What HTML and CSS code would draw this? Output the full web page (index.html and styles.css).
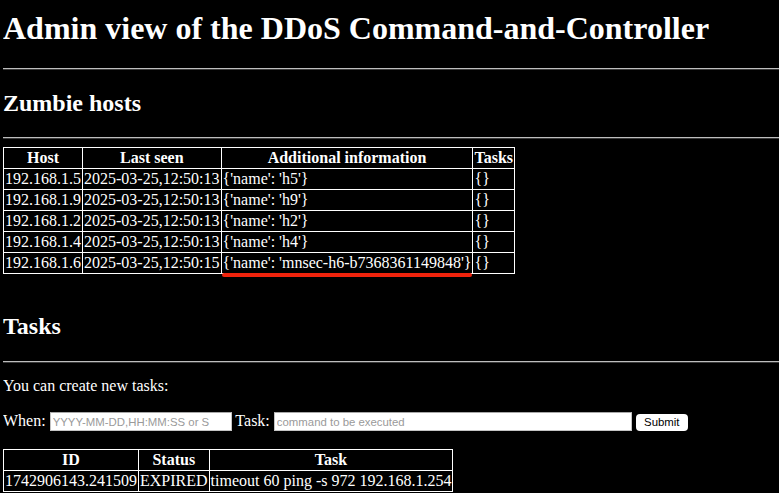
FILE: index.html
```html
<!DOCTYPE html>
<html>
<head>
<meta charset="utf-8">
<title>Admin view</title>
<link rel="stylesheet" href="styles.css">
</head>
<body>
<h1 class="title">Admin view of the DDoS Command-and-Controller</h1>
<hr class="rule">
<h2 class="section">Zumbie hosts</h2>
<hr class="rule">
<table class="grid">
  <tr><th>Host</th><th>Last seen</th><th>Additional information</th><th>Tasks</th></tr>
  <tr><td>192.168.1.5</td><td>2025-03-25,12:50:13</td><td>{'name': 'h5'}</td><td>{}</td></tr>
  <tr><td>192.168.1.9</td><td>2025-03-25,12:50:13</td><td>{'name': 'h9'}</td><td>{}</td></tr>
  <tr><td>192.168.1.2</td><td>2025-03-25,12:50:13</td><td>{'name': 'h2'}</td><td>{}</td></tr>
  <tr><td>192.168.1.4</td><td>2025-03-25,12:50:13</td><td>{'name': 'h4'}</td><td>{}</td></tr>
  <tr><td>192.168.1.6</td><td>2025-03-25,12:50:15</td><td class="marked">{'name': 'mnsec-h6-b7368361149848'}</td><td>{}</td></tr>
</table>
<br>
<h2 class="section tasks-head">Tasks</h2>
<hr class="rule">
<p class="para intro">You can create new tasks:</p>
<form class="para new-task">When: <input class="field when" type="text" placeholder="YYYY-MM-DD,HH:MM:SS or S"> Task: <input class="field cmd" type="text" placeholder="command to be executed"> <button class="submit" type="button">Submit</button></form>
<table class="grid">
  <tr><th>ID</th><th>Status</th><th>Task</th></tr>
  <tr><td>1742906143.241509</td><td>EXPIRED</td><td>timeout 60 ping -s 972 192.168.1.254</td></tr>
</table>
</body>
</html>
```

FILE: styles.css
```css
html, body {
  background: #000;
}
body {
  margin: 0 0 8px 3px;
  color: #fff;
  font-family: "Liberation Serif", "Times New Roman", serif;
  font-size: 16px;
}
.title {
  font-size: 32px;
  font-weight: bold;
  margin: 9.5px 0 21.44px 0;
}
.section {
  font-size: 24px;
  font-weight: bold;
  margin: 19.92px 0;
}
.tasks-head {
  margin: 20.92px 0 20.92px 0;
}
.rule {
  border: none;
  border-top: 1px solid #bdbdbd;
  border-bottom: 1px solid #3a3a3a;
  height: 0;
  margin: 8px 0;
}
.grid {
  border-collapse: collapse;
  border: 1px solid #fff;
}
.grid th, .grid td {
  border: 1px solid #fff;
  padding: 1px;
  white-space: nowrap;
}
.grid th {
  font-weight: bold;
  text-align: center;
}
.grid td {
  text-align: left;
}
.marked {
  position: relative;
}
.marked::after {
  content: "";
  position: absolute;
  left: 0;
  right: 0;
  bottom: -4px;
  height: 3.5px;
  background: #f0230c;
  border-radius: 2px;
}
.para {
  margin: 16px 0;
}
.intro {
  margin: 14px 0 16px 0;
}
.new-task {
  margin: 17px 0 18px 0;
}
.field {
  box-sizing: border-box;
  height: 19px;
  padding: 1px 2px;
  margin: 0;
  border: 1px solid #c4c4c4;
  border-top-color: #a8a8a8;
  background: #fff;
  color: #000;
  font-family: "Liberation Sans", Arial, sans-serif;
  font-size: 11.4px;
  vertical-align: baseline;
}
.field::placeholder {
  color: #9a9a9a;
}
.when {
  width: 182px;
}
.cmd {
  width: 358px;
}
.submit {
  box-sizing: border-box;
  width: 52px;
  height: 17px;
  margin: 0;
  padding: 0 6px;
  border: none;
  border-radius: 4px;
  background: #fff;
  color: #000;
  font-family: "Liberation Sans", Arial, sans-serif;
  font-size: 11.4px;
  line-height: 17px;
  vertical-align: baseline;
}
```
